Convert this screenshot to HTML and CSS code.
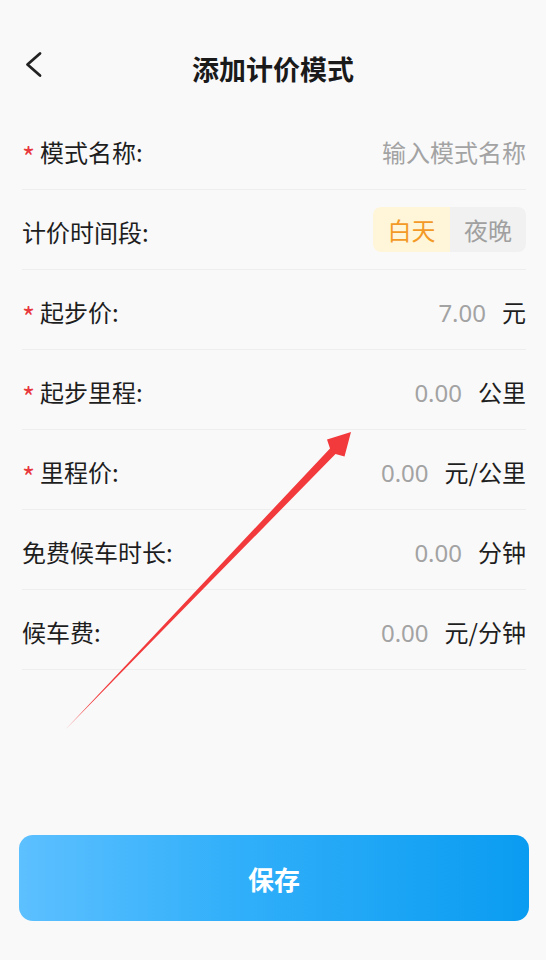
FILE: index.html
```html
<!DOCTYPE html>
<html lang="zh-CN">
<head>
<meta charset="utf-8">
<title>添加计价模式</title>
<link rel="stylesheet" href="styles.css">
</head>
<body>
<div class="page">
  <header class="header">
    <svg class="back" width="20" height="28" viewBox="0 0 20 28"><path d="M16 2.5 L3.5 13.5 L16 24.5" fill="none" stroke="#222" stroke-width="2.8" stroke-linecap="round" stroke-linejoin="round"/></svg>
    <h1 class="title">添加计价模式</h1>
  </header>
  <main class="form">
    <div class="row">
      <div class="label"><span class="req">*</span>模式名称:</div>
      <div class="value"><span class="ph">输入模式名称</span></div>
    </div>
    <div class="row">
      <div class="label">计价时间段:</div>
      <div class="seg">
        <span class="seg-item on">白天</span>
        <span class="seg-item">夜晚</span>
      </div>
    </div>
    <div class="row">
      <div class="label"><span class="req">*</span>起步价:</div>
      <div class="value"><span class="num">7.00</span><span class="unit">元</span></div>
    </div>
    <div class="row">
      <div class="label"><span class="req">*</span>起步里程:</div>
      <div class="value"><span class="num">0.00</span><span class="unit">公里</span></div>
    </div>
    <div class="row">
      <div class="label"><span class="req">*</span>里程价:</div>
      <div class="value"><span class="num">0.00</span><span class="unit">元/公里</span></div>
    </div>
    <div class="row">
      <div class="label">免费候车时长:</div>
      <div class="value"><span class="num">0.00</span><span class="unit">分钟</span></div>
    </div>
    <div class="row">
      <div class="label">候车费:</div>
      <div class="value"><span class="num">0.00</span><span class="unit">元/分钟</span></div>
    </div>
  </main>
  <div class="footer">
    <button class="save">保存</button>
  </div>
</div>
<svg class="arrow" width="546" height="960" viewBox="0 0 546 960">
  <polygon points="65,730 330,448.5 327,439.5 351,432 344.5,456.5 335.5,454 " fill="#f23a3c"/>
</svg>
</body>
</html>
```
FILE: styles.css
```css
* { box-sizing: border-box; }
html, body {
  margin: 0;
  padding: 0;
  background: #f9f9fa;
  font-family: "Noto Sans CJK SC", "Noto Sans", sans-serif;
  color: #222;
}
.page {
  width: 546px;
  height: 960px;
  display: flex;
  flex-direction: column;
}
.header {
  height: 110px;
  padding-top: 46px;
  position: relative;
  display: flex;
  justify-content: center;
}
.back {
  position: absolute;
  left: 24px;
  top: 51px;
}
.title {
  margin: 0;
  font-size: 27px;
  font-weight: 700;
  line-height: 46px;
  height: 46px;
  color: #1a1a1a;
}
.form {
  padding: 0 20px 0 22px;
}
.row {
  height: 80px;
  padding-top: 3px;
  border-bottom: 1px solid #eeeeee;
  display: flex;
  align-items: center;
  justify-content: space-between;
}
.label {
  font-size: 24px;
  display: flex;
  align-items: center;
  color: #1e1e1e;
}
.req {
  color: #e8383d;
  font-size: 28px;
  width: 18px;
  line-height: 1;
  position: relative;
  top: 5px;
}
.value {
  font-size: 24px;
  display: flex;
  align-items: baseline;
}
.ph { color: #a3a3a3; }
.num {
  color: #a3a3a3;
  font-family: "Noto Sans", "Roboto", sans-serif;
  margin-right: 16px;
}
.unit { color: #1e1e1e; }
.seg {
  display: flex;
  height: 45px;
  border-radius: 8px;
  overflow: hidden;
  margin-top: -3px;
}
.seg-item {
  width: 76px;
  display: flex;
  align-items: center;
  justify-content: center;
  font-size: 24px;
  background: #f1f1f1;
  color: #a0a0a0;
}
.seg-item.on {
  width: 77px;
  background: #fff6d9;
  color: #f39a26;
}
.footer {
  margin-top: auto;
  padding: 0 17px 39px 19px;
}
.save {
  width: 100%;
  height: 86px;
  border: 0;
  border-radius: 14px;
  background: linear-gradient(90deg, #5dc0ff 0%, #33b0fa 40%, #0a9cf1 100%);
  color: #fff;
  font-family: "Noto Sans CJK SC", sans-serif;
  font-size: 26px;
  font-weight: 700;
}
.arrow {
  position: absolute;
  left: 0;
  top: 0;
  pointer-events: none;
}
```
